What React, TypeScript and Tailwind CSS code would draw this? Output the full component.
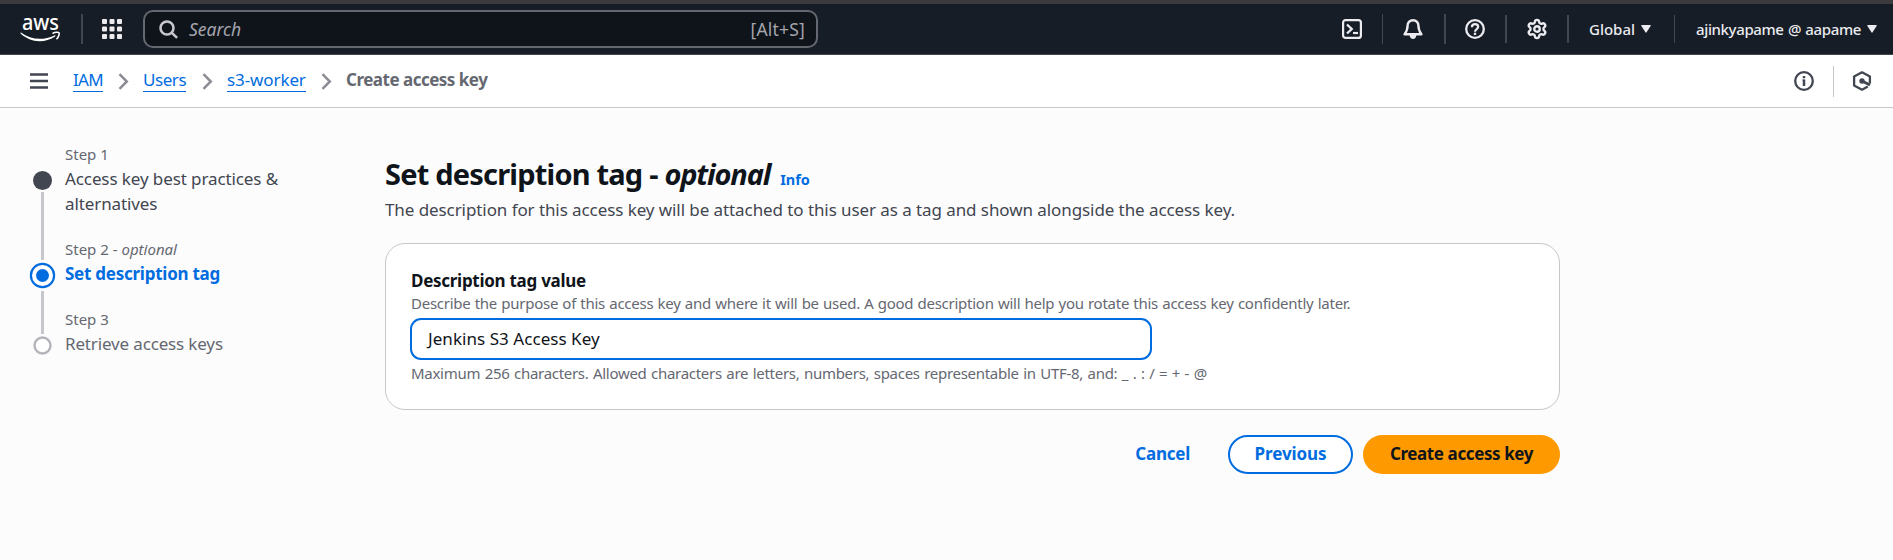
import type { ReactNode } from "react";
import { Settings } from "lucide-react";

function AwsLogo() {
  return (
    <svg width="42" height="48" viewBox="0 -11 42 48" className="shrink-0" fill="none">
      <text x="2" y="14" fill="#fff" fontFamily="Noto Sans, sans-serif" fontSize="21" fontWeight="500" textLength="37" lengthAdjust="spacingAndGlyphs">
        aws
      </text>
      <path d="M1 16.500c5.600 4.100 12 6.300 18.800 6.300 4.800 0 10-1.100 14.600-3.400.8-.4 1.500.5.700 1.100-4.300 3.100-10.300 4.700-15.500 4.700-7.200 0-13.700-2.800-18.800-7.400-.6-.6-.3-1.500.2-1.300Z" fill="#fff" />
      <path d="M33 17.200c2-1 5.400-1.200 6-.5.6.8-.2 4.100-2.100 6" stroke="#fff" strokeWidth="1.600" strokeLinecap="round" />
    </svg>
  );
}

function GridIcon() {
  const cells = [0, 7.5, 15];
  return (
    <svg width="20" height="20" viewBox="0 0 20 20" className="shrink-0" fill="#ebebf0">
      {cells.map((y) => cells.map((x) => <rect key={`${x}-${y}`} x={x} y={y} width="5" height="5" rx="1" />))}
    </svg>
  );
}

function SearchIcon() {
  return (
    <svg width="20" height="20" viewBox="0 0 20 20" className="mt-0.5 shrink-0" fill="none" stroke="#c6c6cd" strokeWidth="2.600">
      <circle cx="8" cy="8" r="6.500" />
      <path d="m12.600 12.600 5.500 5.300" />
    </svg>
  );
}

function TerminalIcon() {
  return (
    <svg width="20" height="20" viewBox="0 0 20 20" className="shrink-0" fill="none" stroke="#ebebf0" strokeWidth="2.200">
      <rect x="1.100" y="1.100" width="17.800" height="17.800" rx="2.500" />
      <path d="m5 5.500 4.700 4.500L5 14.500" strokeWidth="2.400" />
      <path d="M11 14h5" />
    </svg>
  );
}

function BellIcon() {
  return (
    <svg width="20" height="20" viewBox="0 0 20 20" className="shrink-0" fill="none" stroke="#ebebf0" strokeWidth="2.400" strokeLinejoin="round">
      <path d="M10 1.300c-3.500 0-5.400 2.500-5.400 5.300 0 3.700-.8 5.800-3 8.600h16.800c-2.200-2.800-3-4.900-3-8.600 0-2.800-1.900-5.300-5.400-5.300Z" />
      <path d="M6.600 16c.2 2.500 1.600 4 3.400 4s3.200-1.500 3.400-4Z" fill="#ebebf0" stroke="none" />
    </svg>
  );
}

function HelpIcon() {
  return (
    <svg width="20" height="20" viewBox="0 0 20 20" className="shrink-0" fill="none" stroke="#ebebf0" strokeWidth="2.300">
      <circle cx="10" cy="10" r="8.800" />
      <path d="M6.900 8.200c0-2 1.300-3.100 3.200-3.100s3.100 1.100 3.100 2.700c0 2.200-3.200 2.300-3.200 4.900" strokeWidth="2.200" />
      <path d="M10 13.700v2.300" />
    </svg>
  );
}

function InfoIcon() {
  return (
    <svg width="20" height="20" viewBox="0 0 20 20" className="shrink-0" fill="none" stroke="#424650" strokeWidth="2.300">
      <circle cx="10" cy="10" r="8.800" />
      <path d="M10 8.400v6.600M10 5v2.200" strokeWidth="2.500" />
      <path d="M8.600 9.200h1.400" strokeWidth="1.600" />
    </svg>
  );
}

function HexagonIcon() {
  return (
    <svg width="20" height="20" viewBox="0 0 20 20" className="shrink-0" fill="none" stroke="#424650" strokeWidth="2.300">
      <path d="M17.900 12.500V5.600L10 1.300 2.100 5.600v8.800l7.900 4.300 5.800-3.200" strokeLinejoin="round" />
      <circle cx="10" cy="10" r="2.700" fill="#424650" stroke="none" />
      <path d="m10 10 8 4.100" strokeWidth="2.800" />
    </svg>
  );
}

function Chevron() {
  return (
    <svg width="11" height="17" viewBox="0 0 11 17" className="shrink-0" fill="none" stroke="#8c8c94" strokeWidth="2.500">
      <path d="m1.500 1.200 7.300 7.300-7.300 7.300" />
    </svg>
  );
}

function Caret() {
  return (
    <svg width="10" height="8" viewBox="0 0 10 8" className="shrink-0" fill="#ebebf0">
      <path d="M.8 0h8.400q.9 0 .4.900L5.600 7.300q-.6.900-1.200 0L.4.900Q-.1 0 .8 0Z" />
    </svg>
  );
}

function Crumb({ children, className }: { children: ReactNode; className: string }) {
  return (
    <a className={`mb-px border-b border-[#006ce0] text-[17px] leading-[22px] text-[#006ce0] ${className}`}>{children}</a>
  );
}

function Step({ label, children }: { label: ReactNode; children: ReactNode }) {
  return (
    <li className="mb-[23px]">
      <div className="mb-0.5 text-[15px] leading-5 text-[#656871]">{label}</div>
      {children}
    </li>
  );
}

export default function App() {
  return (
    <div className="flex h-[560px] w-[1893px] flex-col overflow-hidden bg-[#fcfcfd] font-['Noto_Sans',sans-serif] text-[#0f141a]">
      <header className="flex h-[55px] shrink-0 items-center border-t-4 border-b border-t-[#3b3b3e] border-b-[#424650] bg-[#161d26] pl-5">
        <AwsLogo />
        <div className="ml-[19px] h-[30px] w-0.5 bg-[#424650]" />
        <div className="ml-[19px]">
          <GridIcon />
        </div>
        <div className="ml-[21px] flex h-[38px] w-[675px] items-center rounded-[10px] border-2 border-[#656871] bg-[#0f141a] pr-[11px] pl-3.5">
          <SearchIcon />
          <span className="ml-2.5 grow text-[17.5px] text-[#a4a4ad] italic">Search</span>
          <span className="text-[17.5px] tracking-[0.2px] text-[#a4a4ad]">[Alt+S]</span>
        </div>
        <div className="ml-[524px] flex items-center">
          <TerminalIcon />
          <div className="ml-5 h-[30px] w-px bg-[#424650]" />
          <div className="ml-5">
            <BellIcon />
          </div>
          <div className="ml-[21px] h-[30px] w-0.5 bg-[#424650]" />
          <div className="ml-[19px]">
            <HelpIcon />
          </div>
          <div className="ml-5 h-7 w-0.5 bg-[#424650]" />
          <Settings size={22} strokeWidth={2.6} color="#ebebf0" className="ml-[19px] shrink-0" />
          <div className="ml-[19px] h-7 w-0.5 bg-[#424650]" />
        </div>
        <div className="ml-5 flex w-[62px] items-center justify-between">
          <span className="text-[15px] font-medium text-[#ebebf0]">Global</span>
          <Caret />
        </div>
        <div className="ml-[23px] h-7 w-px bg-[#424650]" />
        <div className="ml-[21px] flex w-[181px] items-center justify-between whitespace-nowrap">
          <span className="text-[15px] font-medium tracking-[-0.37px] text-[#ebebf0] [word-spacing:0.8px]">ajinkyapame @ aapame</span>
          <Caret />
        </div>
      </header>

      <nav className="flex h-[53px] shrink-0 items-center border-b border-[#c6c6cd] bg-white pl-[30px] whitespace-nowrap">
        <svg width="18" height="16" viewBox="0 0 18 16" className="shrink-0" fill="none" stroke="#424650" strokeWidth="2.400">
          <path d="M0 1.500h18M0 8h18M0 14.500h18" />
        </svg>
        <Crumb className="ml-[25px] w-[30px] tracking-[-0.7px]">IAM</Crumb>
        <div className="ml-[15px]">
          <Chevron />
        </div>
        <Crumb className="ml-[14px] w-[43px] tracking-[-0.45px]">Users</Crumb>
        <div className="ml-[16px]">
          <Chevron />
        </div>
        <Crumb className="ml-[14px] w-[79px] tracking-[-0.1px]">s3-worker</Crumb>
        <div className="ml-[15px]">
          <Chevron />
        </div>
        <span className="mb-0.5 ml-[14px] grow text-[17px] font-bold tracking-[-0.5px] text-[#656871]">Create access key</span>
        <InfoIcon />
        <div className="ml-[19px] h-[31px] w-px bg-[#c6c6cd]" />
        <div className="mr-[21px] ml-[18px]">
          <HexagonIcon />
        </div>
      </nav>

      <div className="flex items-start">
        <aside className="flex w-[385px] shrink-0 pt-9 pl-[29px]">
          <div className="flex w-[27px] flex-col items-center pt-[27px]">
            <span className="size-[19px] rounded-full bg-[#424650]" />
            <span className="mt-0.5 h-[68px] w-[3px] bg-[#c6c6cd]" />
            <svg width="27" height="27" viewBox="0 0 27 27" className="mt-0.5 shrink-0">
              <circle cx="13.500" cy="13.500" r="11.600" fill="#fff" stroke="#006ce0" strokeWidth="2.200" />
              <circle cx="13.500" cy="13.500" r="6.500" fill="#006ce0" />
            </svg>
            <span className="mt-0.5 h-[43px] w-[3px] bg-[#c6c6cd]" />
            <svg width="19" height="19" viewBox="0 0 19 19" className="mt-0.5 shrink-0">
              <circle cx="9.500" cy="9.500" r="8" fill="#fff" stroke="#b4b4bb" strokeWidth="2.400" />
            </svg>
          </div>
          <ol className="ml-[9px] whitespace-nowrap">
            <Step label="Step 1">
              <div className="text-[17px] leading-[25px] tracking-[-0.1px] text-[#424650]">
                Access key best practices &amp;
                <br />
                alternatives
              </div>
            </Step>
            <Step
              label={
                <>
                  Step 2 - <i>optional</i>
                </>
              }
            >
              <div className="text-[17px] leading-[25px] font-bold tracking-[-0.25px] text-[#006ce0]">Set description tag</div>
            </Step>
            <Step label="Step 3">
              <div className="text-[17px] leading-[25px] tracking-[-0.15px] text-[#656871]">Retrieve access keys</div>
            </Step>
          </ol>
        </aside>

        <main className="w-[1175px] pt-[47px] whitespace-nowrap">
          <div className="flex items-baseline">
            <h1 className="text-[29px] leading-[38px] font-bold tracking-[-0.8px]">
              Set description tag - <i className="tracking-[-1.150px]">optional</i>
            </h1>
            <a className="ml-[10px] text-[14.500px] leading-5 font-bold tracking-[-0.1px] text-[#006ce0]">Info</a>
          </div>
          <p className="mt-1 text-[17px] leading-[25px] tracking-[-0.08px] text-[#424650]">
            The description for this access key will be attached to this user as a tag and shown alongside the access key.
          </p>

          <section className="mt-[21px] h-[167px] rounded-[20px] border border-[#c6c6cd] bg-white pt-6 pl-[25px]">
            <div className="text-[17px] leading-[25px] font-bold tracking-[-0.28px]">Description tag value</div>
            <div className="text-[15px] leading-5 tracking-[-0.26px] text-[#656871] [word-spacing:0.6px]">
              Describe the purpose of this access key and where it will be used. A good description will help you rotate this access key confidently later.
            </div>
            <div className="mt-[5px] -ml-px flex h-[42px] w-[742px] items-center rounded-[11px] border-2 border-[#006ce0] bg-white pl-4 text-[17px] tracking-[0.05px]">
              Jenkins S3 Access Key
            </div>
            <div className="mt-[3px] text-[15px] leading-5 tracking-[-0.29px] text-[#656871] [word-spacing:0.9px]">
              Maximum 256 characters. Allowed characters are letters, numbers, spaces representable in UTF-8, and: _ . : / = + - @
            </div>
          </section>

          <div className="mt-[25px] flex h-[39px] items-stretch justify-end text-[17px] font-bold">
            <button className="mr-[38px] pb-0.5 tracking-[-0.25px] text-[#006ce0]">Cancel</button>
            <button className="mr-2.5 w-[125px] rounded-full border-2 border-[#006ce0] bg-white pb-0.5 tracking-[-0.1px] text-[#006ce0]">Previous</button>
            <button className="w-[197px] rounded-full bg-[#ff9900] pb-0.5 tracking-[-0.4px]">Create access key</button>
          </div>
        </main>
      </div>
    </div>
  );
}
